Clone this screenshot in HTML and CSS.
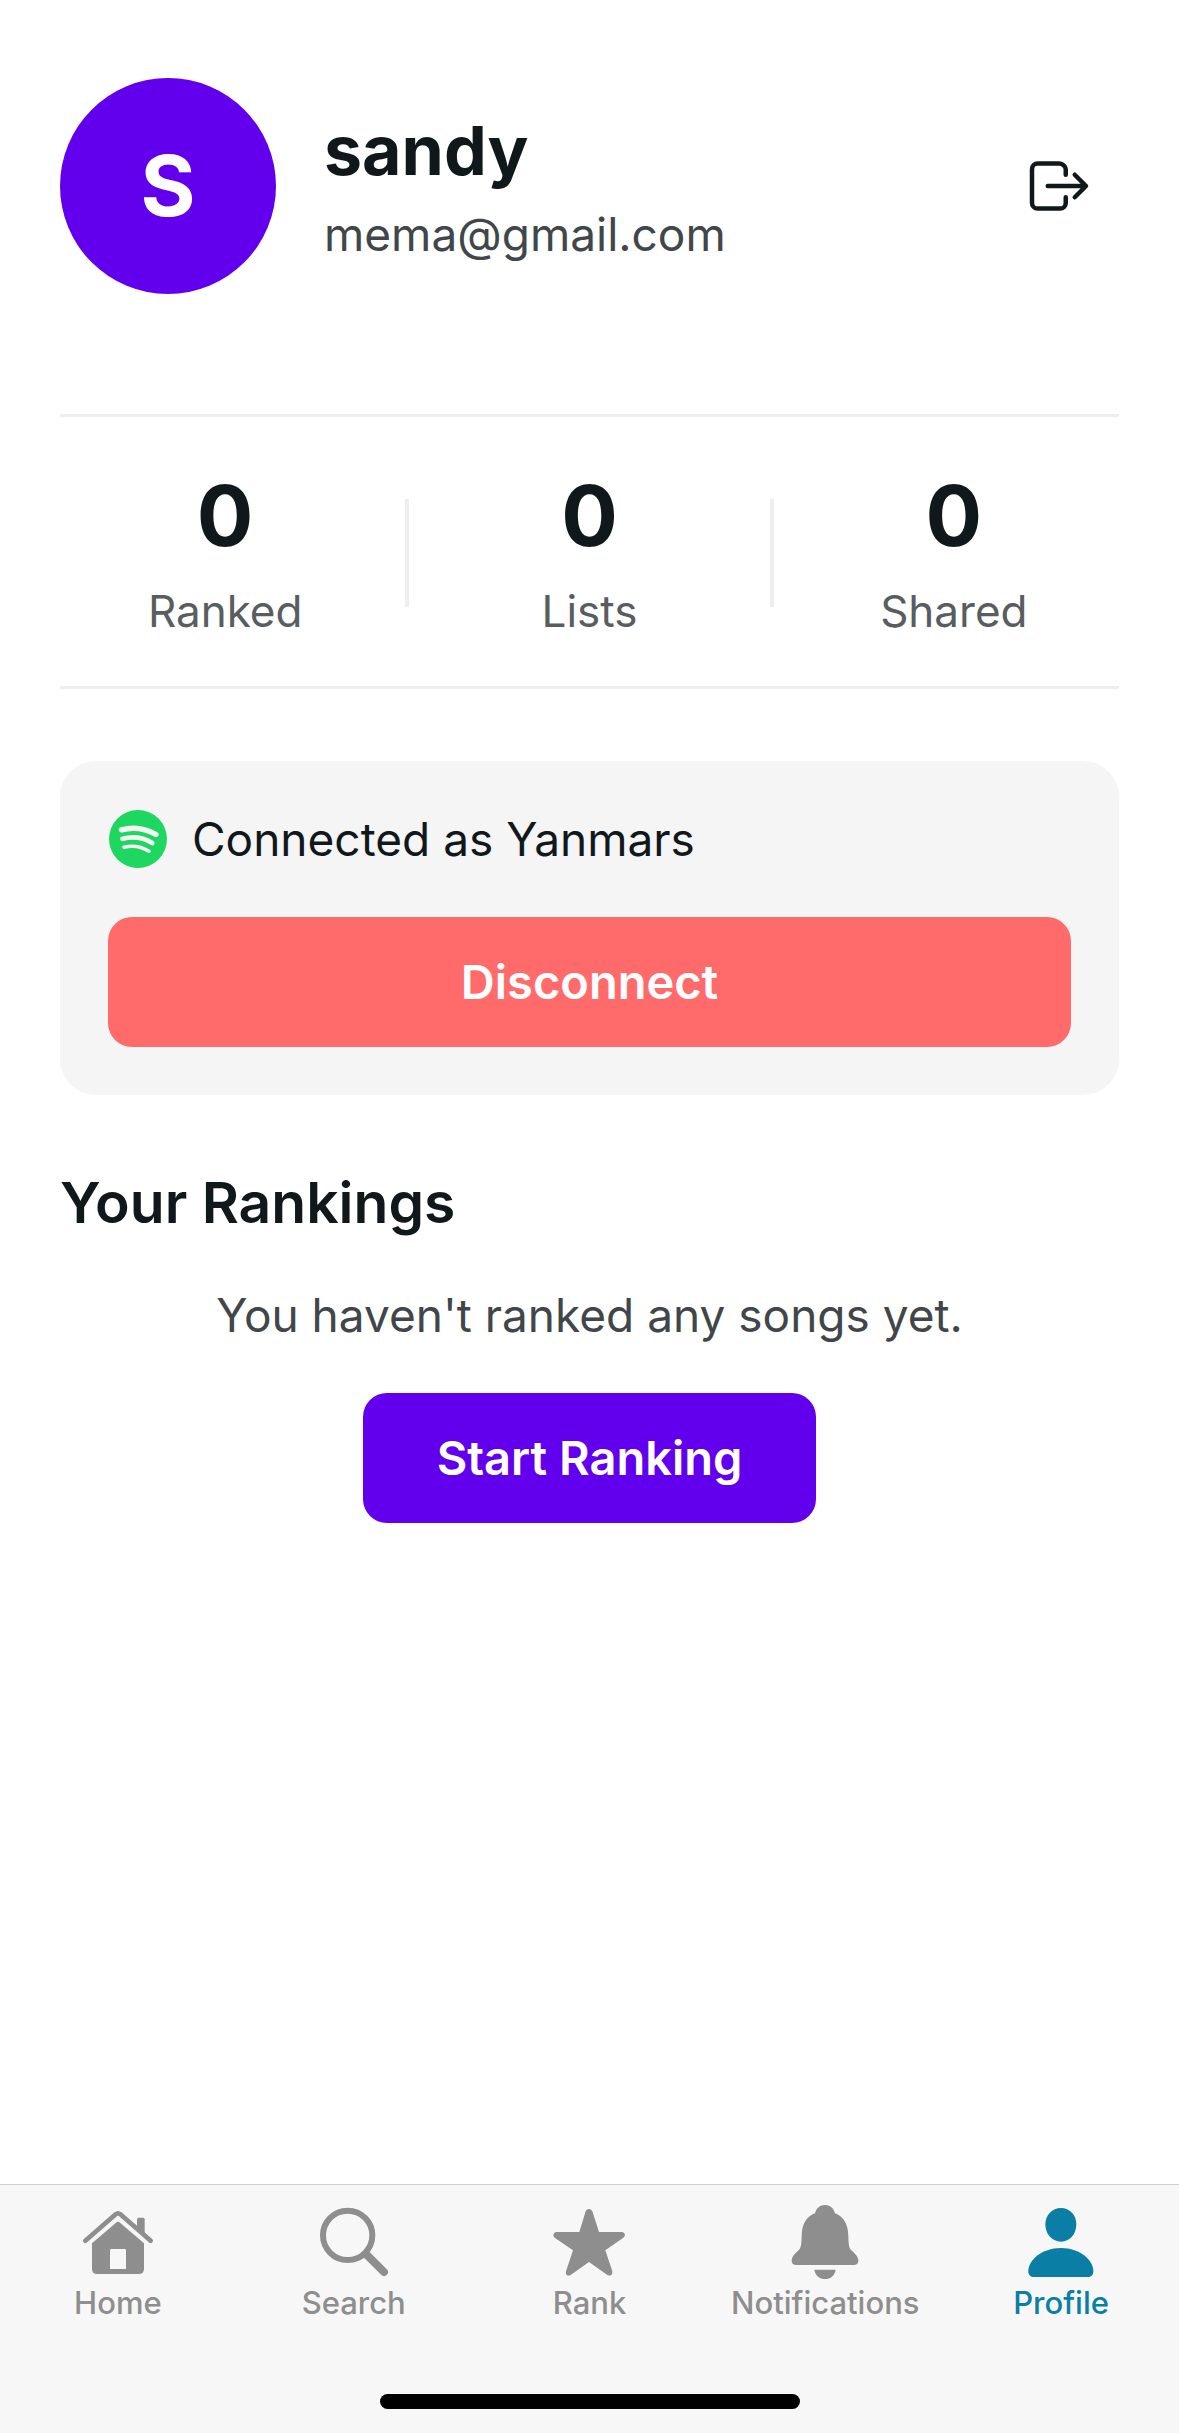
FILE: index.html
```html
<!DOCTYPE html>
<html lang="en">
<head>
<meta charset="utf-8">
<meta name="viewport" content="width=device-width, initial-scale=1">
<title>Profile</title>
<link rel="stylesheet" href="styles.css">
</head>
<body>
<main class="screen">
  <header class="profile">
    <div class="avatar">S</div>
    <div class="identity">
      <h1 class="name">sandy</h1>
      <p class="email">mema@gmail.com</p>
    </div>
    <button class="logout" type="button" aria-label="Log out">
      <svg viewBox="0 0 512 512" aria-hidden="true"><path d="M304 336v40a40 40 0 0 1-40 40H104a40 40 0 0 1-40-40V136a40 40 0 0 1 40-40h152c22.09 0 48 17.91 48 40v40M368 336l80-80-80-80M176 256h256"/></svg>
    </button>
  </header>

  <section class="stats" aria-label="Statistics">
    <div class="stat"><span class="stat-value">0</span><span class="stat-label">Ranked</span></div>
    <div class="stat-divider"></div>
    <div class="stat"><span class="stat-value">0</span><span class="stat-label">Lists</span></div>
    <div class="stat-divider"></div>
    <div class="stat"><span class="stat-value">0</span><span class="stat-label">Shared</span></div>
  </section>

  <section class="card">
    <div class="account">
      <svg class="spotify" viewBox="0 0 60 60" aria-hidden="true">
        <circle cx="30" cy="30" r="29"/>
        <path stroke-width="5.4" d="M13.5 20.800Q31.500 16 48 25.500"/>
        <path stroke-width="4.600" d="M14.500 29.800Q30.500 25.500 44.300 34"/>
        <path stroke-width="3.600" d="M16 38.200Q29.500 35 41 42.200"/>
      </svg>
      <span>Connected as Yanmars</span>
    </div>
    <button class="button button-danger" type="button">Disconnect</button>
  </section>

  <section class="rankings">
    <h2 class="section-title">Your Rankings</h2>
    <p class="empty">You haven't ranked any songs yet.</p>
    <button class="button button-primary" type="button">Start Ranking</button>
  </section>
</main>

<footer class="tabbar">
  <nav class="tabs">
    <a class="tab" href="#home">
      <svg viewBox="108 90 252 252" aria-hidden="true">
        <path class="line" stroke-width="14" d="M136 212L227 133Q234 127 241 133L332 212"/>
        <path d="M291 172V148Q291 143 296 143H309Q314 143 314 148V194Z"/>
        <path fill-rule="evenodd" d="M156 220L228 158Q234 153 240 158L312 220V296Q312 312 296 312H172Q156 312 156 296ZM214 237Q210 237 210 241V297H258V241Q258 237 254 237Z"/>
      </svg>
      <span>Home</span>
    </a>
    <a class="tab" href="#search">
      <svg viewBox="816 90 252 252" aria-hidden="true">
        <circle class="line" stroke-width="18" cx="923" cy="196" r="74"/>
        <path class="line" stroke-width="24" d="M982 256L1032 306"/>
      </svg>
      <span>Search</span>
    </a>
    <a class="tab" href="#rank">
      <svg viewBox="144 90 252 252" aria-hidden="true">
        <path d="M260 124Q263 117 270 117Q277 117 280 124L300 186H368Q377 187 378 195Q378 199 373 203L319 241L340 304Q341 312 336 316Q331 318 325 315L270 276L215 315Q209 318 204 316Q199 312 201 304L222 241L167 203Q162 199 163 195Q164 187 173 186H241Z"/>
      </svg>
      <span>Rank</span>
    </a>
    <a class="tab" href="#notifications">
      <svg viewBox="849 90 252 252" aria-hidden="true">
        <path d="M945 130C949 114 960 105 975 105C990 105 1001 114 1005 130C1033 141 1044 164 1045 198C1046 222 1046 232 1054 241C1062 249 1075 258 1075 272C1075 281 1069 285 1061 285H889C881 285 875 281 875 272C875 258 888 249 896 241C904 232 904 222 905 198C906 164 917 141 945 130Z"/>
        <path d="M943 299H1007C1005 316 991 327 975 327C959 327 945 316 943 299Z"/>
      </svg>
      <span>Notifications</span>
    </a>
    <a class="tab tab-active" href="#profile" aria-current="page">
      <svg viewBox="176 90 252 252" aria-hidden="true">
        <path d="M302 114C328 114 348 135 348 163C348 193 328 215 302 215C276 215 255 193 255 163C255 135 276 114 302 114Z"/>
        <path d="M302 234C360 234 399 272 399 303C399 315 393 321 381 321H222C210 321 204 315 204 303C204 272 243 234 302 234Z"/>
      </svg>
      <span>Profile</span>
    </a>
  </nav>
  <div class="home-indicator"></div>
</footer>
</body>
</html>
```
FILE: styles.css
```css
* {
  box-sizing: border-box;
}

body {
  margin: 0;
  min-height: 100vh;
  display: flex;
  flex-direction: column;
  background: #fff;
  color: #11181c;
  font-family: Inter, "Liberation Sans", sans-serif;
  font-size: 46px;
  line-height: 60px;
}

h1, h2, p {
  margin: 0;
}

button {
  border: 0;
  font: inherit;
  cursor: pointer;
}

.screen {
  flex: 1;
  padding: 78px 60px 72px;
}

.profile {
  display: flex;
  align-items: center;
  gap: 48px;
}

.avatar {
  display: grid;
  place-items: center;
  width: 216px;
  height: 216px;
  border-radius: 50%;
  background: #6200ee;
  color: #fff;
  font-size: 84px;
  font-weight: 700;
}

.identity {
  flex: 1;
  display: flex;
  flex-direction: column;
  gap: 12px;
}

.name {
  font-size: 68px;
  font-weight: 700;
  line-height: 84px;
}

.email {
  color: #41464a;
}

.logout {
  padding: 24px;
  background: none;
}

.logout svg {
  display: block;
  width: 72px;
  height: 72px;
  fill: none;
  stroke: #11181c;
  stroke-width: 32;
  stroke-linecap: round;
  stroke-linejoin: round;
}

.stats {
  display: flex;
  align-items: center;
  margin-top: 120px;
  padding: 48px 0 45px;
  border-top: 3px solid #eee;
  border-bottom: 3px solid #eee;
}

.stat {
  flex: 1;
  display: flex;
  flex-direction: column;
  align-items: center;
  gap: 14px;
}

.stat-value {
  font-size: 84px;
  font-weight: 700;
  line-height: 102px;
}

.stat-label {
  color: #585d60;
  font-size: 44px;
}

.stat-divider {
  width: 4px;
  height: 108px;
  margin: 0 15px;
  background: #eee;
}

.card {
  display: flex;
  flex-direction: column;
  gap: 48px;
  margin-top: 72px;
  padding: 48px;
  border-radius: 36px;
  background: #f5f5f5;
}

.account {
  display: flex;
  align-items: center;
  gap: 24px;
}

.spotify {
  width: 60px;
  height: 60px;
  fill: #1ed760;
}

.spotify path {
  fill: none;
  stroke: #f5f5f5;
  stroke-linecap: round;
}

.button {
  padding: 35px 74px;
  border-radius: 24px;
  color: #fff;
  font-size: 47px;
  font-weight: 600;
}

.button-danger {
  background: #ff6b6b;
}

.button-primary {
  background: #6200ee;
}

.rankings {
  display: flex;
  flex-direction: column;
  align-items: center;
  margin-top: 72px;
}

.section-title {
  align-self: stretch;
  font-size: 57px;
  font-weight: 600;
  line-height: 72px;
}

.empty {
  margin: 46px 0 48px;
  color: #41464a;
}

.tabbar {
  padding-bottom: 24px;
  border-top: 1px solid #d0d0d0;
  background: #f7f7f7;
}

.tabs {
  display: flex;
}

.tab {
  flex: 1;
  display: flex;
  flex-direction: column;
  align-items: center;
  padding-top: 15px;
  color: #8e8e8e;
  font-size: 31px;
  font-weight: 500;
  line-height: 38px;
  text-decoration: none;
}

.tab-active {
  color: #0a7ea4;
}

.tab svg {
  width: 84px;
  height: 84px;
  fill: currentColor;
}

.tab .line {
  fill: none;
  stroke: currentColor;
  stroke-linecap: round;
}

.home-indicator {
  width: 420px;
  height: 15px;
  margin: 72px auto 0;
  border-radius: 8px;
  background: #000;
}
```
